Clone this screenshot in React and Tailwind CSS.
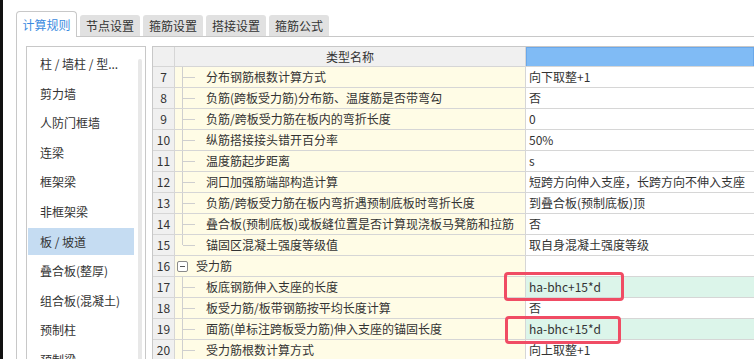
import React from 'react';

const TABS = ['计算规则', '节点设置', '箍筋设置', '搭接设置', '箍筋公式'];

const MENU = [
  '柱 / 墙柱 / 型...',
  '剪力墙',
  '人防门框墙',
  '连梁',
  '框架梁',
  '非框架梁',
  '板 / 坡道',
  '叠合板(整厚)',
  '组合板(混凝土)',
  '预制柱',
  '预制梁',
];

const ROWS = [
  { n: 7, name: '分布钢筋根数计算方式', value: '向下取整+1', tree: 'mid' },
  { n: 8, name: '负筋(跨板受力筋)分布筋、温度筋是否带弯勾', value: '否', tree: 'mid' },
  { n: 9, name: '负筋/跨板受力筋在板内的弯折长度', value: '0', tree: 'mid' },
  { n: 10, name: '纵筋搭接接头错开百分率', value: '50%', tree: 'mid' },
  { n: 11, name: '温度筋起步距离', value: 's', tree: 'mid' },
  { n: 12, name: '洞口加强筋端部构造计算', value: '短跨方向伸入支座，长跨方向不伸入支座', tree: 'mid' },
  { n: 13, name: '负筋/跨板受力筋在板内弯折遇预制底板时弯折长度', value: '到叠合板(预制底板)顶', tree: 'mid' },
  { n: 14, name: '叠合板(预制底板)或板缝位置是否计算现浇板马凳筋和拉筋', value: '否', tree: 'mid' },
  { n: 15, name: '锚固区混凝土强度等级值', value: '取自身混凝土强度等级', tree: 'last' },
  { n: 16, name: '受力筋', value: '', tree: 'group' },
  { n: 17, name: '板底钢筋伸入支座的长度', value: 'ha-bhc+15*d', tree: 'mid', green: true },
  { n: 18, name: '板受力筋/板带钢筋按平均长度计算', value: '否', tree: 'mid' },
  { n: 19, name: '面筋(单标注跨板受力筋)伸入支座的锚固长度', value: 'ha-bhc+15*d', tree: 'mid', green: true },
  { n: 20, name: '受力筋根数计算方式', value: '向上取整+1', tree: 'mid' },
];

const TreeMark = ({ tree }) => {
  if (tree === 'group') {
    return (
      <div className="flex w-[21px] shrink-0 items-center pl-[2px]">
        <div className="flex h-[11px] w-[11px] items-center justify-center rounded-[2px] border border-[#8a8a8a] bg-white">
          <div className="h-px w-[5px] bg-[#555]" />
        </div>
      </div>
    );
  }
  return (
    <div className="relative w-[31px] shrink-0 self-stretch">
      <div
        className={`absolute left-[7px] top-0 w-px bg-[#cfcfcf] ${tree === 'last' ? 'h-1/2' : 'h-full'}`}
      />
      <div className="absolute left-[8px] top-1/2 h-px w-[12px] bg-[#cfcfcf]" />
    </div>
  );
};

const Row = ({ row }) => (
  <div className="flex h-[21px] border-b border-[#d6d6d6]">
    <div className="flex w-[22px] shrink-0 items-center justify-center border-r border-[#d6d6d6] bg-[#f0f0f0]">
      {row.n}
    </div>
    <div className="flex w-[351px] shrink-0 items-center overflow-hidden whitespace-nowrap border-r border-[#d6d6d6] bg-[#fffce6]">
      <TreeMark tree={row.tree} />
      <span>{row.name}</span>
    </div>
    <div
      className={`flex flex-1 items-center whitespace-nowrap pl-[3px] ${row.green ? 'bg-[#dcf5ea]' : 'bg-white'}`}
    >
      {row.value}
    </div>
  </div>
);

export default function App() {
  return (
    <div className="flex h-[359px] w-[754px] overflow-hidden bg-white font-['Noto_Sans_CJK_SC',sans-serif] text-[12px] text-[#333]">
      <div className="w-[3px] shrink-0 bg-[#111]" />

      <div className="flex min-w-0 flex-1 flex-col pl-[13px]">
        {/* tabs */}
        <div className="flex h-[36px] shrink-0 items-end gap-[3px]">
          {TABS.map((t, i) =>
            i === 0 ? (
              <div
                key={t}
                className="relative -mb-px flex h-[26px] w-[61px] items-center justify-center rounded-t-[4px] border border-b-0 border-[#c8c8c8] bg-white text-[#3b8be0]"
              >
                {t}
              </div>
            ) : (
              <div
                key={t}
                className="flex h-[21px] w-[60px] items-center justify-center rounded-t-[3px] bg-[#e1e1e1]"
              >
                {t}
              </div>
            )
          )}
        </div>

        {/* panel */}
        <div className="flex min-h-0 flex-1 gap-[6px] border-l border-t border-[#c8c8c8] pl-[9px] pt-[9px]">
          {/* menu list */}
          <div className="relative w-[120px] shrink-0 border border-b-0 border-[#c8c8c8] bg-white">
            <div className="absolute right-[3px] top-[12px] h-[400px] w-[4px] rounded-full bg-[#e8e8e8]" />
            <div className="flex flex-col gap-[2.6px] pl-px pr-[11px] pt-[3.5px]">
              {MENU.map((m, i) => (
                <div
                  key={m}
                  className={`flex h-[27px] shrink-0 items-center pl-[12px] ${i === 6 ? 'bg-[#c5dcf2]' : ''}`}
                >
                  {m}
                </div>
              ))}
            </div>
          </div>

          {/* table */}
          <div className="relative min-w-0 flex-1 border-l border-t border-[#c8c8c8]">
            <div className="flex h-[20px] border-b border-[#d6d6d6]">
              <div className="w-[22px] shrink-0 border-r border-[#d6d6d6] bg-[#f0f0f0]" />
              <div className="flex w-[351px] shrink-0 items-center justify-center border-r border-[#d6d6d6] bg-[#f0f0f0]">
                类型名称
              </div>
              <div className="flex-1 border border-b-0 border-[#6aa8ea] bg-[#80bbf5]" />
            </div>
            {ROWS.map((r) => (
              <Row key={r.n} row={r} />
            ))}

            {/* highlight boxes */}
            <div className="absolute left-[351px] top-[225px] h-[29px] w-[120px] rounded-[4px] border-[3px] border-[#f04c64]" />
            <div className="absolute left-[352px] top-[269px] h-[28px] w-[116px] rounded-[4px] border-[3px] border-[#f04c64]" />
          </div>
        </div>
      </div>
    </div>
  );
}
